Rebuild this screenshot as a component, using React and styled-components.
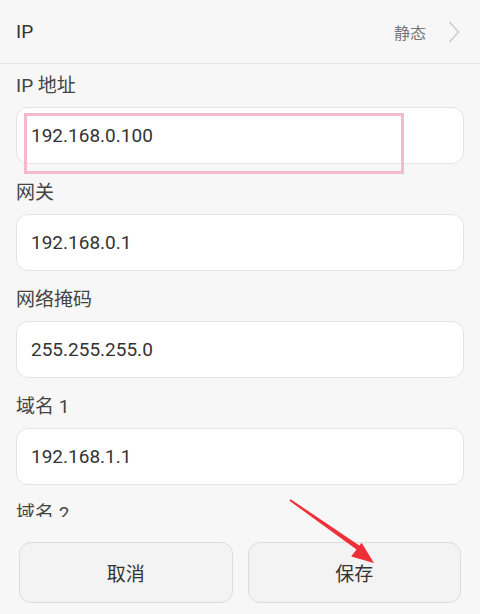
import styled, { createGlobalStyle } from 'styled-components';

const GlobalStyle = createGlobalStyle`
  html, body {
    margin: 0;
    padding: 0;
    background: #f7f7f7;
  }
  * {
    box-sizing: border-box;
  }
`;

const fields = [
  { label: 'IP 地址', value: '192.168.0.100', marked: true },
  { label: '网关', value: '192.168.0.1' },
  { label: '网络掩码', value: '255.255.255.0' },
  { label: '域名 1', value: '192.168.1.1' },
];

export default function App() {
  return (
    <>
      <GlobalStyle />
      <Page>
        <Header>
          <span>IP</span>
          <Mode>
            静态
            <svg width="12" height="22" viewBox="0 0 12 22">
              <path d="M1.5 1 L10.5 11 L1.5 21" fill="none" stroke="#c9c9c9" strokeWidth="1.4" />
            </svg>
          </Mode>
        </Header>
        <Content>
          {fields.map((f) => (
            <Group key={f.label}>
              <Label>{f.label}</Label>
              <Field>
                {f.value}
                {f.marked && <Highlight />}
              </Field>
            </Group>
          ))}
          <Label>域名 2</Label>
        </Content>
        <Footer>
          <Button>取消</Button>
          <Button>保存</Button>
        </Footer>
        <Arrow width="480" height="614" viewBox="0 0 480 614">
          <polygon points="289.4,500.8 290.6,499.2 360.4,546.2 357.6,550.2" fill="#ef2f37" />
          <polygon points="374,563 351.2,556.6 361.6,542.8" fill="#ef2f37" />
        </Arrow>
      </Page>
    </>
  );
}

const Page = styled.div`
  position: relative;
  width: 480px;
  height: 614px;
  display: flex;
  flex-direction: column;
  background: #f7f7f7;
  font-family: Roboto, 'Noto Sans CJK SC', sans-serif;
  color: #333;
  overflow: hidden;
`;

const Header = styled.div`
  height: 64px;
  flex-shrink: 0;
  display: flex;
  align-items: center;
  justify-content: space-between;
  padding: 0 20px 0 16px;
  border-bottom: 1px solid #e4e4e4;
  font-size: 19px;
  color: #333;
`;

const Mode = styled.div`
  display: flex;
  align-items: center;
  gap: 22px;
  font-size: 16px;
  color: #777;
`;

const Content = styled.div`
  flex: 1;
  min-height: 0;
  overflow: hidden;
  padding: 0 16px;
`;

const Group = styled.div`
  display: flex;
  flex-direction: column;
  margin-bottom: 7px;
`;

const Label = styled.div`
  height: 43px;
  display: flex;
  align-items: flex-end;
  padding-bottom: 7px;
  line-height: 28px;
  font-size: 19px;
  color: #444;
`;

const Field = styled.div`
  position: relative;
  height: 57px;
  display: flex;
  align-items: center;
  padding-left: 14px;
  background: #fff;
  border: 1px solid #e3e3e3;
  border-radius: 12px;
  font-size: 19px;
  color: #333;
`;

const Highlight = styled.div`
  position: absolute;
  left: 7px;
  top: 5px;
  width: 380px;
  height: 61px;
  border: 3px solid #f4b9cc;
`;

const Footer = styled.div`
  height: 97px;
  flex-shrink: 0;
  display: flex;
  gap: 15px;
  padding: 25px 19px 11px;
  background: #f7f7f7;
`;

const Button = styled.div`
  flex: 1;
  display: flex;
  align-items: center;
  justify-content: center;
  background: #f3f3f3;
  border: 1px solid #dcdcdc;
  border-radius: 12px;
  font-size: 19px;
  color: #333;
`;

const Arrow = styled.svg`
  position: absolute;
  left: 0;
  top: 0;
  pointer-events: none;
`;
